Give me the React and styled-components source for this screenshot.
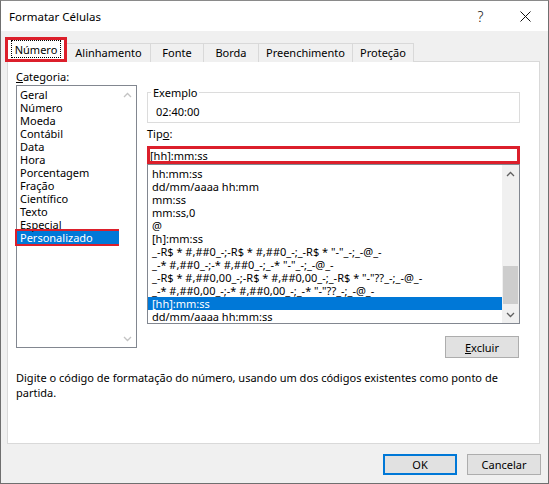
import React from "react";
import styled, { createGlobalStyle, css } from "styled-components";

const UI_FONT = `"Noto Sans", "Open Sans", sans-serif`;
const ACCENT = "#0078d7";
const MARK = "#dc1f2b";

const GlobalStyle = createGlobalStyle`
  html, body {
    margin: 0;
    padding: 0;
    background: #ffffff;
  }
  body {
    font-family: ${UI_FONT};
    font-size: 11px;
  }
  * {
    box-sizing: border-box;
  }
`;

const Window = styled.div`
  width: 549px;
  height: 484px;
  display: flex;
  flex-direction: column;
  background: #f0f0f0;
  border: 1px solid #6f6f6f;
  border-top-color: #8a8a8a;
  color: #000;
  font: 11px/15px ${UI_FONT};
`;

const TitleBar = styled.header`
  height: 30px;
  flex: none;
  display: flex;
  align-items: center;
  background: #ffffff;
  padding-left: 8px;
`;

const Title = styled.h1`
  flex: 1;
  margin: 0;
  font-size: 11.5px;
  font-weight: 400;
  line-height: 15px;
`;

const CaptionButton = styled.button`
  width: 45px;
  height: 30px;
  padding: 0;
  border: 0;
  background: transparent;
  display: flex;
  align-items: center;
  justify-content: center;
  font-family: ${UI_FONT};
  font-size: 14px;
  font-weight: 300;
  color: #111;
`;

const Body = styled.div`
  flex: 1;
  display: flex;
  flex-direction: column;
  padding: 0 8px 0 6px;
`;

const TabStrip = styled.nav`
  height: 25px;
  margin: 6px 0 -1px -2px;
  display: flex;
  align-items: flex-end;
  position: relative;
  z-index: 1;
`;

const Tab = styled.div`
  width: ${(p) => p.$w}px;
  height: 19px;
  margin-left: -1px;
  padding-bottom: 2px;
  display: flex;
  align-items: center;
  justify-content: center;
  background: #f0f0f0;
  border: 1px solid #d9d9d9;
  border-bottom: none;
  white-space: nowrap;

  ${(p) =>
    p.$active &&
    css`
      height: 25px;
      margin-left: 0;
      padding: 0 0 1px;
      background: #ffffff;
      border: 3px solid ${MARK};
      z-index: 2;
    `}
`;

const FocusLabel = styled.span`
  height: 18px;
  padding: 0 3px;
  display: flex;
  align-items: center;
  border: 1px dotted #000;
`;

const Panel = styled.section`
  height: 383px;
  flex: none;
  background: #ffffff;
  border: 1px solid #d9d9d9;
  display: grid;
  grid-template-columns: 121px 1fr;
  column-gap: 10px;
  align-content: start;
  padding: 6px 19px 0 8px;
`;

const Column = styled.div`
  display: flex;
  flex-direction: column;
  min-width: 0;
`;

const FieldLabel = styled.div`
  line-height: 15px;
  margin-top: ${(p) => p.$mt || 0}px;
`;

const ListBox = styled.div`
  height: ${(p) => p.$h}px;
  margin-top: ${(p) => p.$mt || 0}px;
  background: #ffffff;
  border: 1px solid #828790;
  display: grid;
  grid-template-columns: 1fr 17px;
  min-width: 0;
`;

const ListRows = styled.ul`
  list-style: none;
  margin: 0;
  padding: ${(p) => p.$pt}px 0 0;
  min-width: 0;
  overflow: ${(p) => (p.$clip ? "hidden" : "visible")};
`;

const ListRow = styled.li`
  height: 13px;
  line-height: 13px;
  padding-left: ${(p) => p.$indent}px;
  white-space: nowrap;

  ${(p) =>
    p.$selected &&
    css`
      background: ${ACCENT};
      color: #ffffff;
    `}

  ${(p) =>
    p.$marked &&
    css`
      outline: 2px solid ${MARK};
    `}
`;

const ScrollBar = styled.div`
  display: flex;
  flex-direction: column;
  background: ${(p) => p.$bg};
`;

const ScrollArrow = styled.div`
  height: 17px;
  flex: none;
  display: flex;
  align-items: center;
  justify-content: center;
  color: ${(p) => (p.$disabled ? "#c3c3c3" : "#606060")};
`;

const ScrollTrack = styled.div`
  flex: 1;
  padding: 0 1px;
`;

const Thumb = styled.div`
  height: ${(p) => p.$h}px;
  margin-top: ${(p) => p.$top}px;
  background: #cdcdcd;
`;

const SampleBox = styled.fieldset`
  margin: 17px 0 0;
  padding: 4px 8px 3px;
  border: 1px solid #dcdcdc;
  min-width: 0;
`;

const SampleLegend = styled.legend`
  margin-left: -5px;
  padding: 0 2px;
  line-height: 15px;
`;

const SampleValue = styled.div`
  line-height: 15px;
`;

const TypeField = styled.input`
  width: 100%;
  height: 18px;
  margin-top: 5px;
  padding: 0;
  border: 3px solid ${MARK};
  outline: none;
  font: 11px ${UI_FONT};
  color: #000;
  background: #ffffff;
`;

const ButtonRow = styled.div`
  display: flex;
  justify-content: flex-end;
  margin-top: 12px;
  padding-right: 1px;
`;

const PushButton = styled.button`
  width: 74px;
  height: ${(p) => p.$h}px;
  padding: 0;
  background: #e1e1e1;
  border: 1px solid #adadad;
  font: 11px/15px ${UI_FONT};
  color: #000;

  ${(p) =>
    p.$default &&
    css`
      border: 2px solid ${ACCENT};
    `}
`;

const Description = styled.p`
  grid-column: 1 / -1;
  margin: 12px 0 0;
  line-height: 15px;
`;

const Footer = styled.footer`
  display: flex;
  justify-content: flex-end;
  gap: 10px;
  padding-top: 10px;
  margin-right: -1px;
`;

const Chevron = ({ up }) => (
  <svg width="9" height="6" viewBox="0 0 9 6" fill="none">
    <polyline
      points={up ? "1,5 4.5,1.5 8,5" : "1,1 4.5,4.5 8,1"}
      stroke="currentColor"
      strokeWidth="1.3"
    />
  </svg>
);

const CloseGlyph = () => (
  <svg width="11" height="11" viewBox="0 0 11 11">
    <path d="M0.5 0.5 L10.5 10.5 M10.5 0.5 L0.5 10.5" stroke="#111" strokeWidth="1" />
  </svg>
);

const tabs = [
  { label: "Número", w: 62, active: true },
  { label: "Alinhamento", w: 85 },
  { label: "Fonte", w: 54 },
  { label: "Borda", w: 56 },
  { label: "Preenchimento", w: 95 },
  { label: "Proteção", w: 62 },
];

const categories = [
  "Geral",
  "Número",
  "Moeda",
  "Contábil",
  "Data",
  "Hora",
  "Porcentagem",
  "Fração",
  "Científico",
  "Texto",
  "Especial",
  "Personalizado",
];

const formats = [
  "hh:mm:ss",
  "dd/mm/aaaa hh:mm",
  "mm:ss",
  "mm:ss,0",
  "@",
  "[h]:mm:ss",
  '_-R$ * #,##0_-;-R$ * #,##0_-;_-R$ * "-"_-;_-@_-',
  '_-* #,##0_-;-* #,##0_-;_-* "-"_-;_-@_-',
  '_-R$ * #,##0,00_-;-R$ * #,##0,00_-;_-R$ * "-"??_-;_-@_-',
  '_-* #,##0,00_-;-* #,##0,00_-;_-* "-"??_-;_-@_-',
  "[hh]:mm:ss",
  "dd/mm/aaaa hh:mm:ss",
];

export default function App() {
  const selectedCategory = "Personalizado";
  const selectedFormat = "[hh]:mm:ss";

  return (
    <>
      <GlobalStyle />
      <Window>
        <TitleBar>
          <Title>Formatar Células</Title>
          <CaptionButton aria-label="Ajuda">?</CaptionButton>
          <CaptionButton aria-label="Fechar">
            <CloseGlyph />
          </CaptionButton>
        </TitleBar>

        <Body>
          <TabStrip>
            {tabs.map((t) => (
              <Tab key={t.label} $w={t.w} $active={t.active}>
                {t.active ? <FocusLabel>{t.label}</FocusLabel> : t.label}
              </Tab>
            ))}
          </TabStrip>

          <Panel>
            <Column>
              <FieldLabel $mt={1}>
                <u>C</u>ategoria:
              </FieldLabel>
              <ListBox $h={263} $mt={1}>
                <ListRows $pt={2}>
                  {categories.map((c) => (
                    <ListRow
                      key={c}
                      $indent={3}
                      $selected={c === selectedCategory}
                      $marked={c === selectedCategory}
                    >
                      {c}
                    </ListRow>
                  ))}
                </ListRows>
                <ScrollBar $bg="#ffffff">
                  <ScrollArrow $disabled>
                    <Chevron up />
                  </ScrollArrow>
                  <ScrollTrack />
                  <ScrollArrow $disabled>
                    <Chevron />
                  </ScrollArrow>
                </ScrollBar>
              </ListBox>
            </Column>

            <Column>
              <SampleBox>
                <SampleLegend>Exemplo</SampleLegend>
                <SampleValue>02:40:00</SampleValue>
              </SampleBox>

              <FieldLabel $mt={3}>
                Tip<u>o</u>:
              </FieldLabel>
              <TypeField readOnly value={selectedFormat} />

              <ListBox $h={160}>
                <ListRows $pt={2} $clip>
                  {formats.map((f) => (
                    <ListRow key={f} $indent={4} $selected={f === selectedFormat}>
                      {f}
                    </ListRow>
                  ))}
                </ListRows>
                <ScrollBar $bg="#f0f0f0">
                  <ScrollArrow>
                    <Chevron up />
                  </ScrollArrow>
                  <ScrollTrack>
                    <Thumb $top={84} $h={38} />
                  </ScrollTrack>
                  <ScrollArrow>
                    <Chevron />
                  </ScrollArrow>
                </ScrollBar>
              </ListBox>

              <ButtonRow>
                <PushButton $h={22}>
                  <u>E</u>xcluir
                </PushButton>
              </ButtonRow>
            </Column>

            <Description>
              Digite o código de formatação do número, usando um dos códigos existentes como ponto de
              partida.
            </Description>
          </Panel>

          <Footer>
            <PushButton $h={21} $default>
              OK
            </PushButton>
            <PushButton $h={21}>Cancelar</PushButton>
          </Footer>
        </Body>
      </Window>
    </>
  );
}
